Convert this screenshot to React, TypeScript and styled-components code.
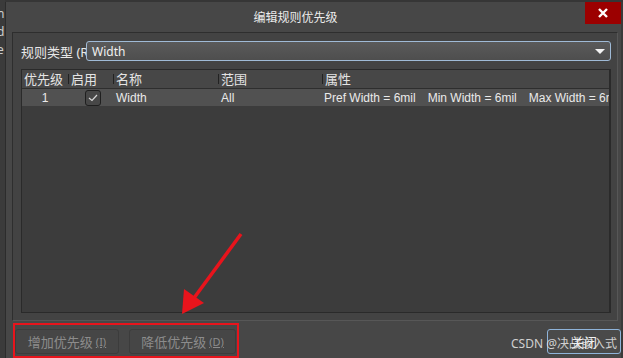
import React from 'react';
import styled, { createGlobalStyle } from 'styled-components';

const GlobalStyle = createGlobalStyle`
  html, body {
    margin: 0;
    padding: 0;
    background: #333333;
    overflow: hidden;
  }
  body {
    font-family: "Noto Sans", "Noto Sans CJK SC", sans-serif;
    font-size: 12px;
    color: #e6e6e6;
  }
`;

const Screen = styled.div`
  position: relative;
  display: flex;
  width: 623px;
  height: 358px;
  overflow: hidden;
  background: #363636;
`;

const BackStrip = styled.div`
  width: 5px;
  flex-shrink: 0;
  display: flex;
  flex-direction: column;
  padding-top: 8px;
  gap: 6px;
  overflow: hidden;
  background: #3b3b3b;
  span {
    display: block;
    height: 12px;
    line-height: 12px;
    font-size: 12px;
    color: #cfcfcf;
    margin-left: -3px;
  }
`;

const Dialog = styled.div`
  flex: 1;
  margin-top: 2px;
  display: flex;
  flex-direction: column;
  background: #474747;
  border-left: 1px solid #2c2c2c;
  border-right: 2px solid #3a3a3a;
`;

const TitleBar = styled.div`
  display: flex;
  height: 30px;
  flex-shrink: 0;
`;

const Title = styled.div`
  flex: 1;
  text-align: center;
  line-height: 31px;
  font-size: 12px;
  color: #ececec;
`;

const CloseX = styled.div`
  width: 36px;
  height: 22px;
  background: #9c0000;
  display: flex;
  align-items: center;
  justify-content: center;
`;

const Panel = styled.div`
  flex: 1;
  margin: 0 3px 0 6px;
  padding: 8px 6px 7px 8px;
  display: flex;
  flex-direction: column;
  gap: 8px;
  background: #434343;
  border-top: 1px solid #2e2e2e;
  border-left: 1px solid #2e2e2e;
  border-bottom: 1px solid #575757;
  border-right: 1px solid #575757;
`;

const TypeRow = styled.div`
  display: flex;
  align-items: center;
  height: 20px;
`;

const TypeLabel = styled.div`
  width: 65px;
  overflow: hidden;
  white-space: nowrap;
  font-size: 13px;
  color: #e8e8e8;
`;

const Select = styled.div`
  flex: 1;
  height: 18px;
  display: flex;
  align-items: center;
  justify-content: space-between;
  padding: 0 5px 0 5px;
  border: 1px solid #9fbad6;
  border-radius: 3px;
  background: linear-gradient(#5a5a5a, #4e4e4e);
  color: #f0f0f0;
`;

const Caret = styled.div`
  width: 0;
  height: 0;
  border-left: 5px solid transparent;
  border-right: 5px solid transparent;
  border-top: 5px solid #f4f4f4;
`;

const Table = styled.div`
  flex: 1;
  display: flex;
  flex-direction: column;
  background: #3c3c3c;
  border: 1px solid #2a2a2a;
  border-right-width: 2px;
  overflow: hidden;
`;

const Cols = styled.div<{ $head?: boolean }>`
  display: grid;
  grid-template-columns: 46px 45px 105px 104px 1fr;
  height: ${p => (p.$head ? '18px' : '17px')};
  line-height: ${p => (p.$head ? '17px' : '16px')};
  align-items: center;
  background: ${p => (p.$head ? '#474747' : '#515151')};
  border-bottom: ${p => (p.$head ? '1px solid #2e2e2e' : 'none')};
  font-family: ${p =>
    p.$head
      ? '"Noto Sans", "Noto Sans CJK SC", sans-serif'
      : '"Liberation Sans", "Noto Sans CJK SC", sans-serif'};
  font-size: ${p => (p.$head ? '13px' : '12px')};
  color: ${p => (p.$head ? '#e4e4e4' : '#eaeaea')};
  white-space: nowrap;
`;

const HeadCell = styled.div<{ $sep?: boolean }>`
  display: flex;
  align-items: center;
  gap: 2px;
  padding-left: ${p => (p.$sep ? '0' : '2px')};
  &::before {
    content: '';
    display: ${p => (p.$sep ? 'block' : 'none')};
    width: 1px;
    height: 10px;
    background: #222;
  }
`;

const Cell = styled.div<{ $center?: boolean }>`
  display: flex;
  align-items: center;
  justify-content: ${p => (p.$center ? 'center' : 'flex-start')};
  padding-left: ${p => (p.$center ? '0' : '3px')};
  overflow: hidden;
`;

const Props = styled.div`
  display: flex;
  gap: 12px;
  padding-left: 2px;
  overflow: hidden;
`;

const Check = styled.div`
  width: 14px;
  height: 14px;
  margin-left: 14px;
  border: 1px solid #1f1f1f;
  border-radius: 3px;
  background: #474747;
  display: flex;
  align-items: center;
  justify-content: center;
`;

const Footer = styled.div`
  height: 37px;
  flex-shrink: 0;
  display: flex;
  align-items: flex-start;
  justify-content: space-between;
  padding-left: 7px;
`;

const Marked = styled.div`
  margin-top: 2px;
  display: flex;
  gap: 10px;
  padding: 4px 1px 2px 0;
  border: 2px solid #e8141c;
`;

const Button = styled.div<{ $w: number; $primary?: boolean }>`
  width: ${p => p.$w}px;
  height: 25px;
  box-sizing: border-box;
  display: flex;
  align-items: center;
  justify-content: center;
  gap: 3px;
  border-radius: 3px;
  border: 1px solid ${p => (p.$primary ? '#8fb4da' : '#3c3c3c')};
  background: ${p => (p.$primary ? '#4a4a4a' : '#464646')};
  color: ${p => (p.$primary ? '#f2f2f2' : '#8c8c8c')};
  font-size: 13px;
  small {
    font-size: 11px;
    text-decoration: underline;
  }
`;

const CloseButton = styled(Button)`
  margin-top: 8px;
`;

const Watermark = styled.div`
  position: absolute;
  right: 6px;
  bottom: 6px;
  font-size: 12px;
  color: rgba(235, 235, 235, 0.85);
  pointer-events: none;
`;

const Annotation = styled.svg`
  position: absolute;
  left: 0;
  top: 0;
  pointer-events: none;
`;

const App = () => {
  return (
    <Screen>
      <GlobalStyle />
      <BackStrip>
        <span>n</span>
        <span>d</span>
        <span>e</span>
      </BackStrip>
      <Dialog>
        <TitleBar>
          <Title>编辑规则优先级</Title>
          <CloseX>
            <svg width="10" height="10" viewBox="0 0 10 10">
              <path d="M1 1 L9 9 M9 1 L1 9" stroke="#fff" strokeWidth="2.4" />
            </svg>
          </CloseX>
        </TitleBar>
        <Panel>
          <TypeRow>
            <TypeLabel>规则类型 (R)</TypeLabel>
            <Select>
              <span>Width</span>
              <Caret />
            </Select>
          </TypeRow>
          <Table>
            <Cols $head>
              <HeadCell>优先级</HeadCell>
              <HeadCell $sep>启用</HeadCell>
              <HeadCell $sep>名称</HeadCell>
              <HeadCell $sep>范围</HeadCell>
              <HeadCell $sep>属性</HeadCell>
            </Cols>
            <Cols>
              <Cell $center>1</Cell>
              <Cell>
                <Check>
                  <svg width="10" height="8" viewBox="0 0 10 8">
                    <path d="M1 4 L4 6.5 L9 1" stroke="#d8d8d8" strokeWidth="1.2" fill="none" />
                  </svg>
                </Check>
              </Cell>
              <Cell>Width</Cell>
              <Cell>All</Cell>
              <Props>
                <span>Pref Width = 6mil</span>
                <span>Min Width = 6mil</span>
                <span>Max Width = 6mil</span>
              </Props>
            </Cols>
          </Table>
        </Panel>
        <Footer>
          <Marked>
            <Button $w={104}>增加优先级 <small>(I)</small></Button>
            <Button $w={107}>降低优先级 <small>(D)</small></Button>
          </Marked>
          <CloseButton $w={74} $primary>关闭</CloseButton>
        </Footer>
      </Dialog>
      <Watermark>CSDN @决战嵌入式</Watermark>
      <Annotation width="623" height="358" viewBox="0 0 623 358">
        <line x1="241" y1="234" x2="194" y2="298" stroke="#e8141c" strokeWidth="3.5" />
        <polygon points="182,314 184,289 204,303" fill="#e8141c" />
      </Annotation>
    </Screen>
  );
};

export default App;
